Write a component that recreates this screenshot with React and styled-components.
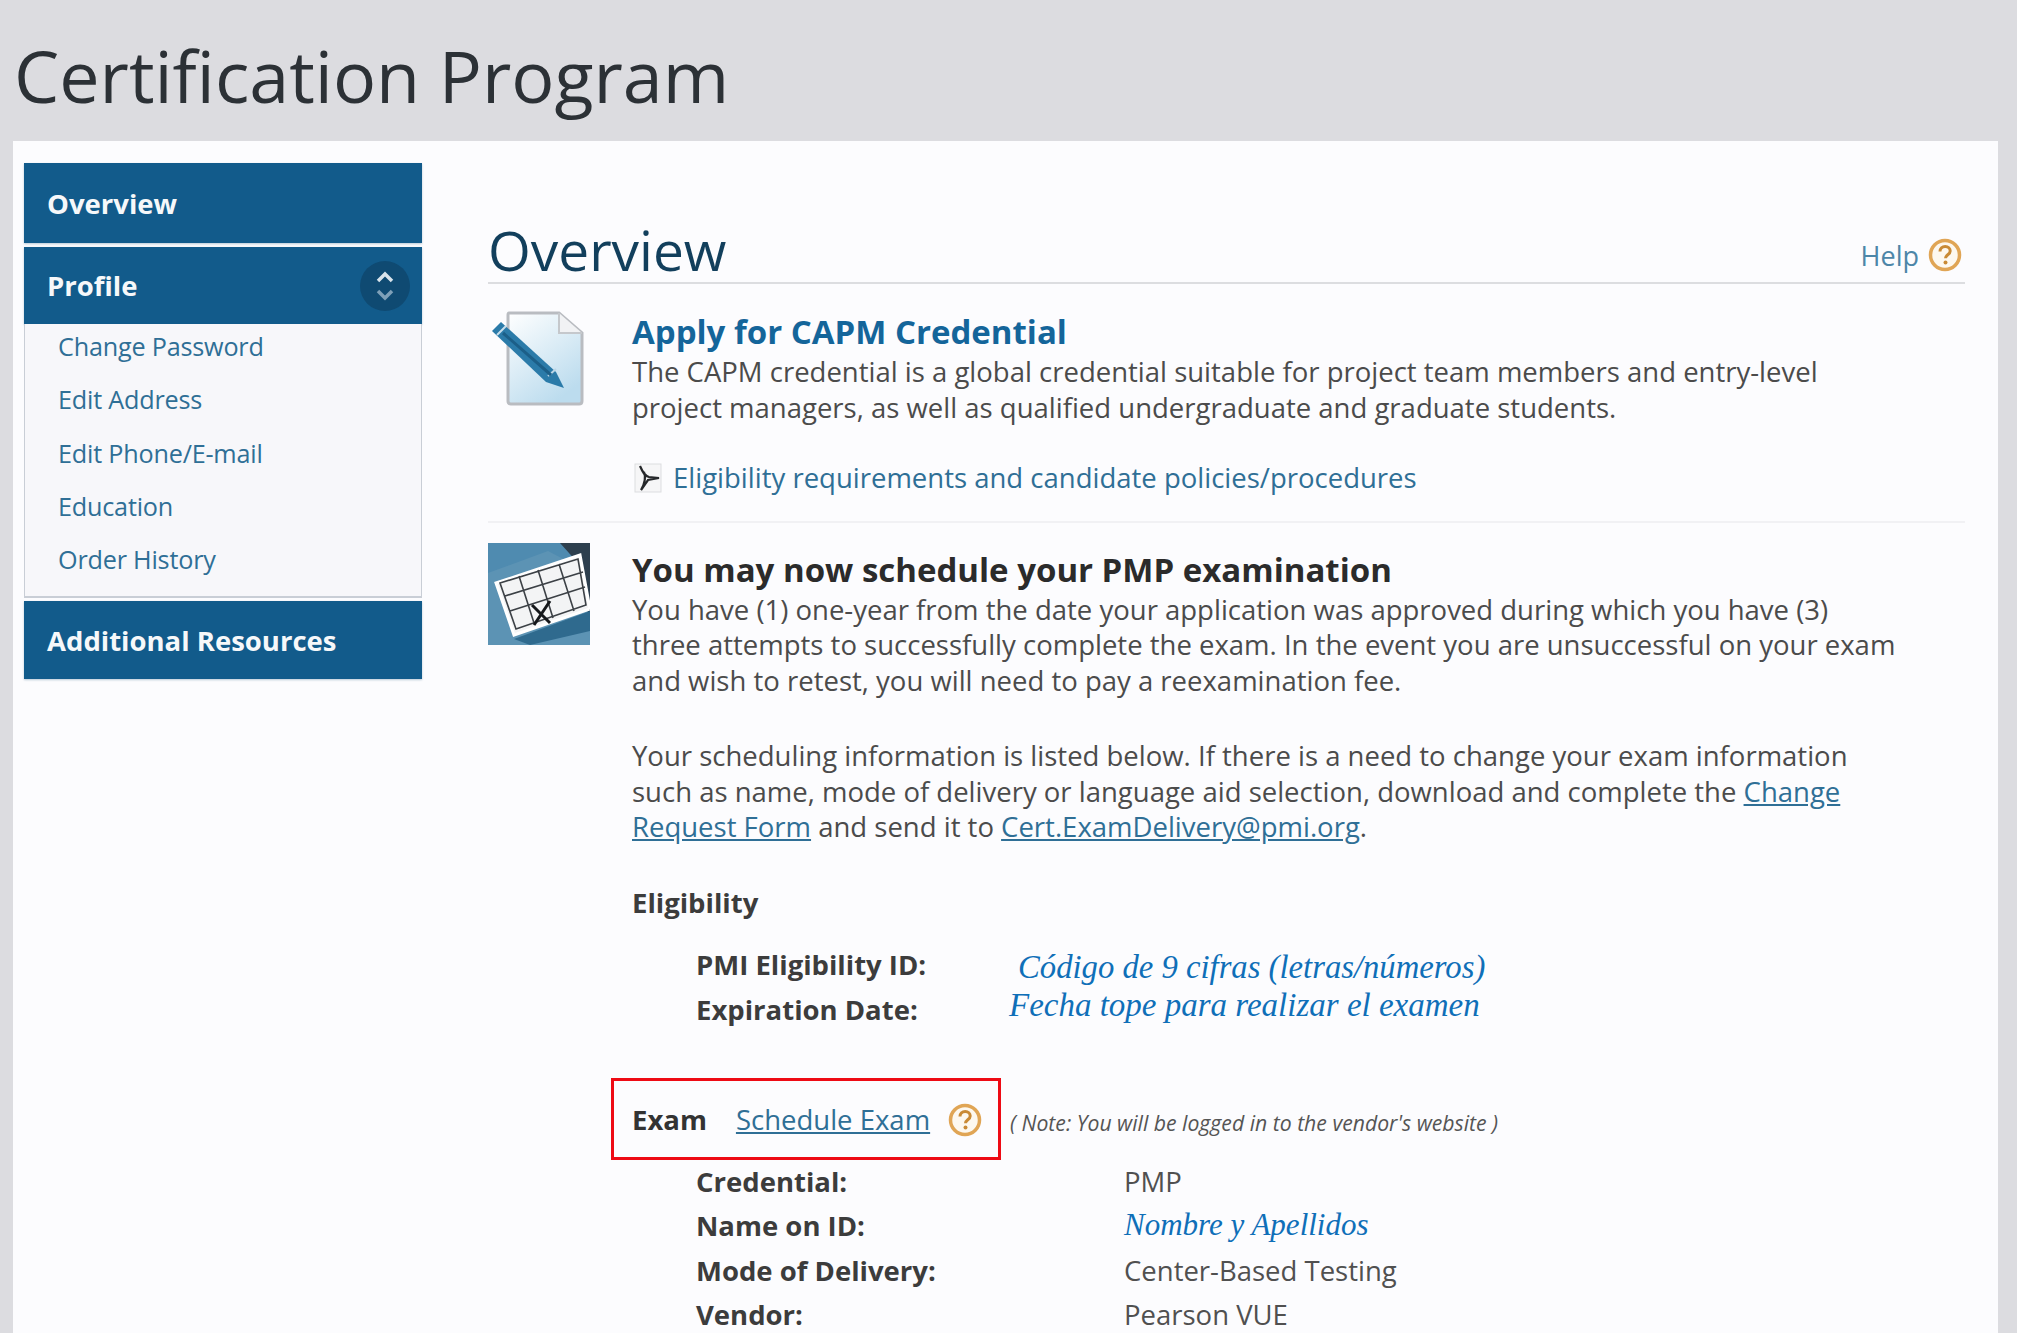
import React from "react";
import styled, { createGlobalStyle } from "styled-components";

const Global = createGlobalStyle`
  html, body { margin: 0; padding: 0; background: #dcdce0; }
  body { font-family: "Open Sans", "Noto Sans", sans-serif; color: #454545; }
  #root { height: 1333px; overflow: hidden; }
`;

const Page = styled.div`
  width: 2017px; height: 1333px; overflow: hidden; background: #dcdce0;
  display: flex; flex-direction: column;
`;
const TopBar = styled.header`
  height: 141px; flex: none; display: flex; align-items: flex-start; padding: 29px 0 0 14px; box-sizing: border-box;
`;
const PageTitle = styled.h1`
  margin: 0; font-size: 71.8px; line-height: 92px; font-weight: 400; color: #2c3136;
`;
const Panel = styled.div`
  flex: 1; margin: 0 19px 0 13px; background: #fcfcfe; display: grid;
  grid-template-columns: 398px 1fr; column-gap: 66px; padding: 22px 33px 0 11px; min-height: 0;
`;
const Sidebar = styled.nav`
  display: flex; flex-direction: column; width: 398px;
`;
const SideHead = styled.div`
  height: ${p => p.$h}px; margin-bottom: ${p => p.$mb || 0}px; background: #125b8b; color: #f6f8fa;
  font-weight: 700; font-size: 27.5px; display: flex; align-items: center; justify-content: space-between;
  padding: 0 12px 0 23px; box-sizing: border-box; box-shadow: 0 1px 2px #b9c9d6;
`;
const Toggle = styled.span`
  width: 50px; height: 50px; border-radius: 50%; background: #0f4a72; display: flex; align-items: center; justify-content: center;
`;
const SubMenu = styled.ul`
  list-style: none; margin: 0 0 3px; padding: 0 0 0 33px; height: 274px; box-sizing: border-box; background: #f7f7fa;
  border: solid #c9ced6; border-width: 0 1.5px 2px 1.5px;
  display: flex; flex-direction: column;
`;
const SubItem = styled.li`
  height: 53.3px; line-height: 44px; font-size: 25.2px; color: #2f6f96; letter-spacing: -0.2px; white-space: nowrap;
`;
const Main = styled.main`
  min-width: 0; display: flex; flex-direction: column; line-height: 35.5px; font-size: 27.5px;
`;
const MainHead = styled.div`
  height: 121px; flex: none; box-sizing: border-box; border-bottom: 2px solid #dcdde0;
  display: flex; align-items: flex-end; justify-content: space-between; padding: 0 3px 0 0;
`;
const MainTitle = styled.h2`
  margin: 0 0 -4px; font-size: 55px; font-weight: 400; line-height: 72px; color: #123f5c;
`;
const Help = styled.span`
  display: flex; align-items: center; gap: 9px; color: #4d86a8; font-size: 27px; margin-bottom: 9px;
`;
const Section = styled.section`
  display: grid; grid-template-columns: 144px 1fr; padding-top: ${p => p.$pt}px;
`;
const IconCell = styled.div`
  display: flex; align-items: flex-start; margin-top: ${p => p.$mt || 0}px;
`;
const Body = styled.div`white-space: nowrap; padding-top: ${p => p.$pt || 0}px;`;
const Heading = styled.h3`
  margin: 0 0 4px; font-size: 33px; line-height: 36px; font-weight: 700; color: ${p => p.$color};
`;
const Para = styled.p`
  margin: ${p => p.$mt || 0}px 0 0; color: #4b4b4b;
`;
const FileLink = styled.div`
  display: flex; align-items: center; gap: 11px; margin-top: 35px; padding-left: 2px; color: #2f6f96;
`;
const Divider = styled.hr`
  border: 0; height: 2px; margin: 25px 0 0; background: #f1f1f4;
`;
const TextLink = styled.a`
  color: #2f6f96; text-decoration: underline;
`;
const SubHead = styled.div`
  margin-top: 40px; font-weight: 700; color: #3c3c3c;
`;
const Facts = styled.dl`
  margin: ${p => p.$mt}px 0 0 64px; display: grid; grid-template-columns: ${p => p.$col}px 1fr; grid-auto-rows: 44.3px; align-items: center;
`;
const Term = styled.dt`
  font-weight: 700; color: #3c3c3c;
`;
const Value = styled.dd`
  margin: 0; color: #505050;
`;
const Note = styled.dd`
  margin: 0 0 0 ${p => p.$ml || 0}px; color: #0f6fb8; font-style: italic; font-size: ${p => p.$fs}px;
  transform: translateY(${p => p.$dy || 0}px); font-family: "Liberation Serif", serif;
`;
const ExamRow = styled.div`
  display: flex; align-items: center;
`;
const ExamBox = styled.div`
  width: 390px; height: 82px; box-sizing: border-box; border: 3px solid #ee0a14; margin-left: -21px;
  display: flex; align-items: center; padding: 3px 0 0 18px; flex: none;
`;
const ExamLabel = styled.span`font-weight: 700; color: #333; margin-right: 29px;`;
const ExamLink = styled(TextLink)`margin-right: 18px;`;
const VendorNote = styled.span`
  font-style: italic; font-size: 21.2px; color: #555; margin: 9px 0 0 9px;
`;
const ExamWrap = styled.div`margin-top: 46px;`;

const HelpIcon = ({ size = 34 }) => (
  <svg width={size} height={size} viewBox="0 0 34 34">
    <circle cx="17" cy="17" r="14.5" fill="#fdf8ef" stroke="#e0a555" strokeWidth="3.5" />
    <path d="M12 13.5c0-3 2.300-5 5.200-5 3 0 5 1.900 5 4.400 0 3.800-4.700 3.900-4.700 7.400" fill="none" stroke="#c98a35" strokeWidth="3" />
    <circle cx="17.500" cy="24.500" r="2" fill="#c98a35" />
  </svg>
);

const UpDown = () => (
  <svg width="22" height="36" viewBox="0 0 22 36" fill="none" stroke="#d9e4ec" strokeWidth="3.500">
    <path d="M4 13l7-7 7 7" />
    <path d="M4 23l7 7 7-7" stroke="#7fa0b8" />
  </svg>
);

const PencilDoc = () => (
  <svg width="102" height="96" viewBox="0 0 102 96">
    <defs>
      <linearGradient id="docFill" x1="0" y1="0" x2="0.6" y2="1">
        <stop offset="0" stopColor="#ffffff" />
        <stop offset="1" stopColor="#bcdcee" />
      </linearGradient>
    </defs>
    <path d="M21 2h50l23 20v68q0 3-3 3H23q-3 0-3-3V4q0-2 1-2z" fill="url(#docFill)" stroke="#b9bcc1" strokeWidth="3" />
    <path d="M71 2v20h23" fill="#f1f2f4" stroke="#c5c8cc" strokeWidth="2" />
    <path d="M4 20l9-9 55 50 8 16-18-6z" fill="#2b7ba9" />
    <path d="M9 24l9-9" stroke="#c9dfec" strokeWidth="2" />
    <path d="M60 65l8-7" stroke="#bcd6e6" strokeWidth="2" />
    <path d="M15 22l48 42" stroke="#1c5f88" strokeWidth="3" />
  </svg>
);

const PdfIcon = () => (
  <svg width="28" height="30" viewBox="0 0 28 30">
    <rect x="1" y="1" width="26" height="28" fill="#f6f6f7" stroke="#dcdde0" />
    <path d="M6 3c3 7 5 10 9 11l10 1-11 2-7 10c4-7 5-13 3-18" fill="none" stroke="#26282b" strokeWidth="2.200" />
  </svg>
);

const CalendarIcon = () => (
  <svg width="102" height="102" viewBox="0 0 102 102">
    <rect width="102" height="102" fill="#5c93b4" />
    <path d="M0 0h102v30L60 8 0 30z" fill="#4f8bb0" />
    <path d="M72 0h30v80L90 20z" fill="#2d3f4e" />
    <path d="M8 40L92 12l10 54-76 26z" fill="#f3f4f5" stroke="#ffffff" strokeWidth="3" />
    <path d="M12 40L90 16l8 46-70 24zM31 33l15 47M50 27l15 48M71 21l15 47M17 53l78-24M22 68l75-24" fill="none" stroke="#3c4146" strokeWidth="1.600" />
    <path d="M44 62l18 18M62 58L46 82" stroke="#15181b" strokeWidth="3" />
    <path d="M26 96l76-28v20l-60 14z" fill="#2f6a8e" />
  </svg>
);

export default function App() {
  return (
    <Page>
      <Global />
      <TopBar><PageTitle>Certification Program</PageTitle></TopBar>
      <Panel>
        <Sidebar>
          <SideHead $h={80} $mb={4}>Overview</SideHead>
          <SideHead $h={77}>Profile<Toggle><UpDown /></Toggle></SideHead>
          <SubMenu>
            {["Change Password", "Edit Address", "Edit Phone/E-mail", "Education", "Order History"].map(t => (
              <SubItem key={t}>{t}</SubItem>
            ))}
          </SubMenu>
          <SideHead $h={78}>Additional Resources</SideHead>
        </Sidebar>
        <Main>
          <MainHead>
            <MainTitle>Overview</MainTitle>
            <Help>Help <HelpIcon /></Help>
          </MainHead>
          <Section $pt={30}>
            <IconCell $mt={-3}><PencilDoc /></IconCell>
            <Body>
              <Heading $color="#14659a">Apply for CAPM Credential</Heading>
              <Para>The CAPM credential is a global credential suitable for project team members and entry-level<br />project managers, as well as qualified undergraduate and graduate students.</Para>
              <FileLink><PdfIcon />Eligibility requirements and candidate policies/procedures</FileLink>
            </Body>
          </Section>
          <Divider />
          <Section $pt={20}>
            <IconCell><CalendarIcon /></IconCell>
            <Body $pt={9}>
              <Heading $color="#2b2b2b">You may now schedule your PMP examination</Heading>
              <Para>You have (1) one-year from the date your application was approved during which you have (3)<br />three attempts to successfully complete the exam. In the event you are unsuccessful on your exam<br />and wish to retest, you will need to pay a reexamination fee.</Para>
              <Para $mt={40}>Your scheduling information is listed below. If there is a need to change your exam information<br />such as name, mode of delivery or language aid selection, download and complete the <TextLink>Change</TextLink><br /><TextLink>Request Form</TextLink> and send it to <TextLink>Cert.ExamDelivery@pmi.org</TextLink>.</Para>
              <SubHead>Eligibility</SubHead>
              <Facts $mt={23} $col={314}>
                <Term>PMI Eligibility ID:</Term><Note $fs={32.7} $dy={3} $ml={8}>Código de 9 cifras (letras/números)</Note>
                <Term>Expiration Date:</Term><Note $fs={33} $dy={-4} $ml={-1}>Fecha tope para realizar el examen</Note>
              </Facts>
              <ExamWrap>
                <ExamRow>
                  <ExamBox>
                    <ExamLabel>Exam</ExamLabel>
                    <ExamLink>Schedule Exam</ExamLink>
                    <HelpIcon />
                  </ExamBox>
                  <VendorNote>( Note: You will be logged in to the vendor's website )</VendorNote>
                </ExamRow>
              </ExamWrap>
              <Facts $mt={0} $col={428}>
                <Term>Credential:</Term><Value>PMP</Value>
                <Term>Name on ID:</Term><Note $fs={31} $dy={-1}>Nombre y Apellidos</Note>
                <Term>Mode of Delivery:</Term><Value>Center-Based Testing</Value>
                <Term>Vendor:</Term><Value>Pearson VUE</Value>
              </Facts>
            </Body>
          </Section>
        </Main>
      </Panel>
    </Page>
  );
}
